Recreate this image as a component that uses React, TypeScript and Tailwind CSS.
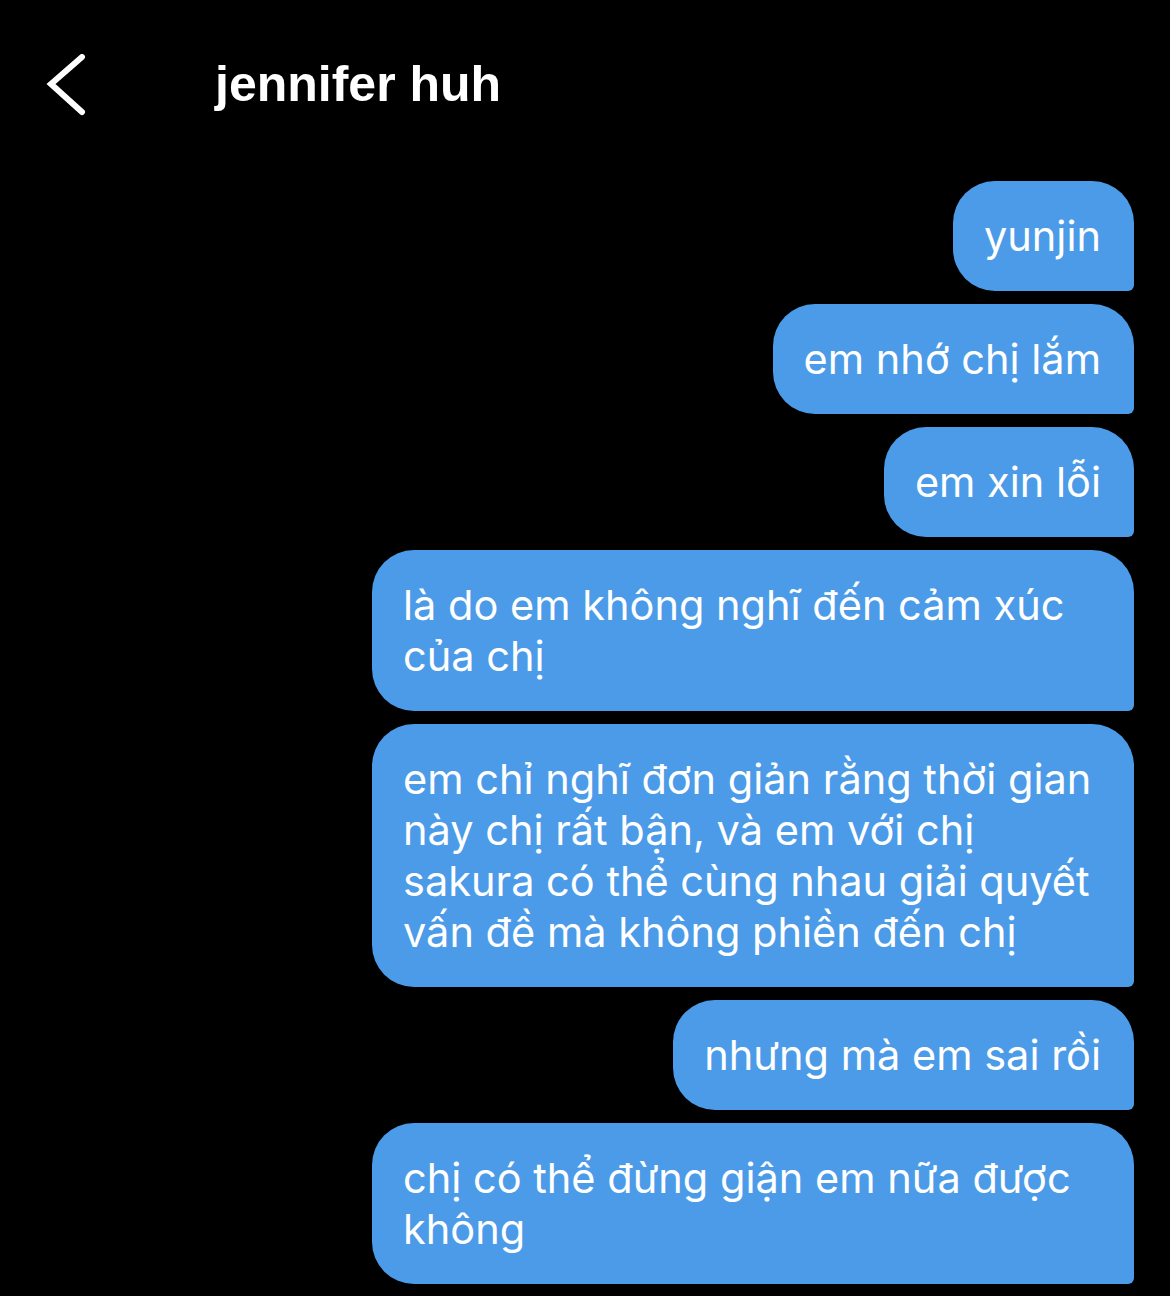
const messages = [
  'yunjin',
  'em nhớ chị lắm',
  'em xin lỗi',
  'là do em không nghĩ đến cảm xúc của chị',
  'em chỉ nghĩ đơn giản rằng thời gian này chị rất bận, và em với chị sakura có thể cùng nhau giải quyết vấn đề mà không phiền đến chị',
  'nhưng mà em sai rồi',
  'chị có thể đừng giận em nữa được không',
]

function Bubble({ text }: { text: string }) {
  return (
    <div className="max-w-[762px] rounded-[42px] rounded-br-[6px] bg-[#4b9be8] pl-[31px] pr-[33px] py-[29.5px] text-[41.5px] leading-[51px] text-white">
      {text}
    </div>
  )
}

export default function App() {
  return (
    <div className="min-h-[1296px] w-[1170px] bg-black font-['Inter',sans-serif]">
      <header className="flex h-[170px] items-start pt-[54px]">
        <svg viewBox="0 0 44 62" className="ml-[44px] h-[62px] w-[44px]" fill="none">
          <polyline
            points="38,3 7,30 38,58"
            stroke="white"
            strokeWidth="6"
            strokeLinecap="round"
            strokeLinejoin="miter"
          />
        </svg>
        <h1 className="ml-[127px] mt-[0px] font-['Liberation_Sans',sans-serif] text-[50px] font-bold leading-[60px] text-white">
          jennifer huh
        </h1>
      </header>
      <main className="mt-[11px] flex flex-col items-end gap-[13px] pr-[36px]">
        {messages.map((m) => (
          <Bubble key={m} text={m} />
        ))}
      </main>
    </div>
  )
}
